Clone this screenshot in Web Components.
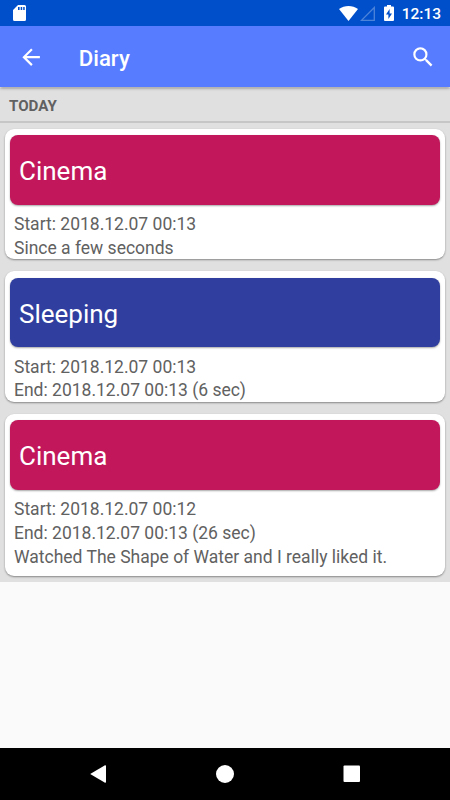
<!DOCTYPE html>
<html lang="en">
<head>
<meta charset="utf-8">
<title>Diary</title>
<style>
  body {
    margin: 0;
    font-family: Roboto, "Liberation Sans", sans-serif;
  }
</style>
</head>
<body>
<diary-app>
  <status-bar slot="status" time="12:13"></status-bar>
  <app-toolbar slot="toolbar" title="Diary"></app-toolbar>
  <day-section title="TODAY">
    <diary-entry title="Cinema" color="#c2185b">
      <div>Start: 2018.12.07 00:13</div>
      <div>Since a few seconds</div>
    </diary-entry>
    <diary-entry title="Sleeping" color="#303f9f">
      <div>Start: 2018.12.07 00:13</div>
      <div>End: 2018.12.07 00:13 (6 sec)</div>
    </diary-entry>
    <diary-entry title="Cinema" color="#c2185b" style="--note-space: 8px">
      <div>Start: 2018.12.07 00:12</div>
      <div>End: 2018.12.07 00:13 (26 sec)</div>
      <div>Watched The Shape of Water and I really liked it.</div>
    </diary-entry>
  </day-section>
  <nav-bar slot="nav"></nav-bar>
</diary-app>

<script>
class DiaryApp extends HTMLElement {
  constructor() {
    super();
    this.attachShadow({ mode: "open" });
    this.shadowRoot.innerHTML = `
      <style>
        :host {
          display: flex;
          flex-direction: column;
          width: 450px;
          height: 800px;
          overflow: hidden;
          background: #fafafa;
        }
        main { flex: 1; min-height: 0; }
      </style>
      <slot name="status"></slot>
      <slot name="toolbar"></slot>
      <main><slot></slot></main>
      <slot name="nav"></slot>
    `;
  }
}

class StatusBar extends HTMLElement {
  constructor() {
    super();
    this.attachShadow({ mode: "open" });
  }

  connectedCallback() {
    this.shadowRoot.innerHTML = `
      <style>
        :host {
          display: flex;
          align-items: center;
          height: 26px;
          flex: none;
          box-sizing: border-box;
          padding: 0 9px 0 13px;
          background: #004fca;
          color: #fff;
          z-index: 2;
        }
        svg { display: block; flex: none; }
        .wifi { margin-left: auto; }
        .signal { margin-left: 2px; }
        .battery { margin-left: 9px; }
        span {
          margin-left: 8px;
          font-size: 15.5px;
          font-weight: 500;
          line-height: 24px;
          padding-top: 2px;
        }
      </style>
      <svg width="13" height="16" viewBox="0 0 13 16">
        <path fill="#fff" fill-rule="evenodd" d="M5 0h6.5A1.5 1.5 0 0 1 13 1.5v13a1.5 1.5 0 0 1-1.5 1.5h-10A1.5 1.5 0 0 1 0 14.5V5zM5 2v3h1.6V2zM7.7 2v3h1.5V2zM10.2 2v3h1.5V2z"/>
      </svg>
      <svg class="wifi" width="19" height="15" viewBox="0 0 19 15">
        <path fill="#fff" d="M0 3C5.5-1 13.5-1 19 3L9.5 15z"/>
      </svg>
      <svg class="signal" width="15" height="15" viewBox="0 0 15 15">
        <path fill="none" stroke="#4d84da" stroke-width="1.3" d="M14.3 1.5v12.8H1.5z"/>
      </svg>
      <svg class="battery" width="10" height="16" viewBox="0 0 10 16">
        <path fill="#fff" fill-rule="evenodd" d="M3 0h4v1.6h2a1 1 0 0 1 1 1V15a1 1 0 0 1-1 1H1a1 1 0 0 1-1-1V2.6a1 1 0 0 1 1-1h2zM5.6 4L2 9.5h2.4V14L8 8.4H5.6z"/>
      </svg>
      <span>${this.getAttribute("time")}</span>
    `;
  }
}

class AppToolbar extends HTMLElement {
  constructor() {
    super();
    this.attachShadow({ mode: "open" });
  }

  connectedCallback() {
    this.shadowRoot.innerHTML = `
      <style>
        :host {
          display: flex;
          align-items: center;
          height: 61px;
          flex: none;
          box-sizing: border-box;
          margin-bottom: .5px;
          padding: 0 13.5px 0 17.5px;
          background: #587cff;
          color: #fff;
          box-shadow: 0 1px 3px rgba(0, 0, 0, .45);
          z-index: 1;
        }
        svg { display: block; margin-top: 1px; fill: #fff; }
        h1 {
          flex: 1;
          margin: 0 0 0 35px;
          padding-top: 3px;
          font-size: 22.2px;
          font-weight: 500;
          line-height: 26px;
        }
      </style>
      <svg width="26.25" height="26.25" viewBox="0 0 24 24">
        <path d="M20 11H7.83l5.59-5.59L12 4l-8 8 8 8 1.41-1.41L7.83 13H20v-2z"/>
      </svg>
      <h1>${this.getAttribute("title")}</h1>
      <svg width="26.25" height="26.25" viewBox="0 0 24 24">
        <path d="M15.5 14h-.79l-.28-.27A6.471 6.471 0 0 0 16 9.5 6.5 6.5 0 1 0 9.5 16c1.61 0 3.09-.59 4.23-1.57l.27.28v.79l5 4.99L20.49 19l-4.99-5zm-6 0C7.01 14 5 11.99 5 9.5S7.01 5 9.5 5 14 7.01 14 9.5 11.99 14 9.5 14z"/>
      </svg>
    `;
  }
}

class DaySection extends HTMLElement {
  constructor() {
    super();
    this.attachShadow({ mode: "open" });
  }

  connectedCallback() {
    this.shadowRoot.innerHTML = `
      <style>
        :host { display: block; background: #e0e0e0; }
        h2 {
          box-sizing: border-box;
          height: 35px;
          margin: 0;
          padding: 1px 9px 0;
          border-bottom: 2px solid #c6c6c6;
          color: #616161;
          font-size: 15.1px;
          font-weight: 700;
          line-height: 34px;
        }
        .entries {
          display: flex;
          flex-direction: column;
          gap: 12px;
          padding: 6px 5px;
        }
      </style>
      <h2>${this.getAttribute("title")}</h2>
      <div class="entries"><slot></slot></div>
    `;
  }
}

class DiaryEntry extends HTMLElement {
  constructor() {
    super();
    this.attachShadow({ mode: "open" });
  }

  connectedCallback() {
    this.shadowRoot.innerHTML = `
      <style>
        :host {
          display: block;
          padding: 6.5px 5px var(--note-space, 0);
          border-radius: 9px;
          background: #fff;
          box-shadow: 0 1px 2px rgba(0, 0, 0, .4);
        }
        h3 {
          box-sizing: border-box;
          height: 69.5px;
          margin: 0;
          padding: 0 9px;
          border-radius: 8px;
          background: ${this.getAttribute("color")};
          box-shadow: 0 1px 2px rgba(0, 0, 0, .35);
          color: #fff;
          font-size: 26px;
          font-weight: 400;
          line-height: 72.5px;
        }
        .details {
          padding: 8.5px 4px 0;
          margin-bottom: -1.5px;
          color: #616161;
          font-size: 17.5px;
          line-height: 23.75px;
          white-space: nowrap;
        }
      </style>
      <h3>${this.getAttribute("title")}</h3>
      <div class="details"><slot></slot></div>
    `;
  }
}

class NavBar extends HTMLElement {
  constructor() {
    super();
    this.attachShadow({ mode: "open" });
    this.shadowRoot.innerHTML = `
      <style>
        :host {
          display: flex;
          align-items: center;
          justify-content: space-between;
          height: 52.5px;
          flex: none;
          box-sizing: border-box;
          padding: 0 89px;
          background: #000;
        }
        svg { display: block; fill: #fff; }
      </style>
      <svg width="18" height="18" viewBox="0 0 18 18"><path d="M1.2 9L16 .2Q17 0 17 1v16q0 1-1 .8z"/></svg>
      <svg width="18" height="18" viewBox="0 0 18 18"><circle cx="9" cy="9" r="9"/></svg>
      <svg width="18" height="18" viewBox="0 0 18 18"><rect x=".5" y=".5" width="16.5" height="16.5" rx="1"/></svg>
    `;
  }
}

customElements.define("diary-app", DiaryApp);
customElements.define("status-bar", StatusBar);
customElements.define("app-toolbar", AppToolbar);
customElements.define("day-section", DaySection);
customElements.define("diary-entry", DiaryEntry);
customElements.define("nav-bar", NavBar);
</script>
</body>
</html>
